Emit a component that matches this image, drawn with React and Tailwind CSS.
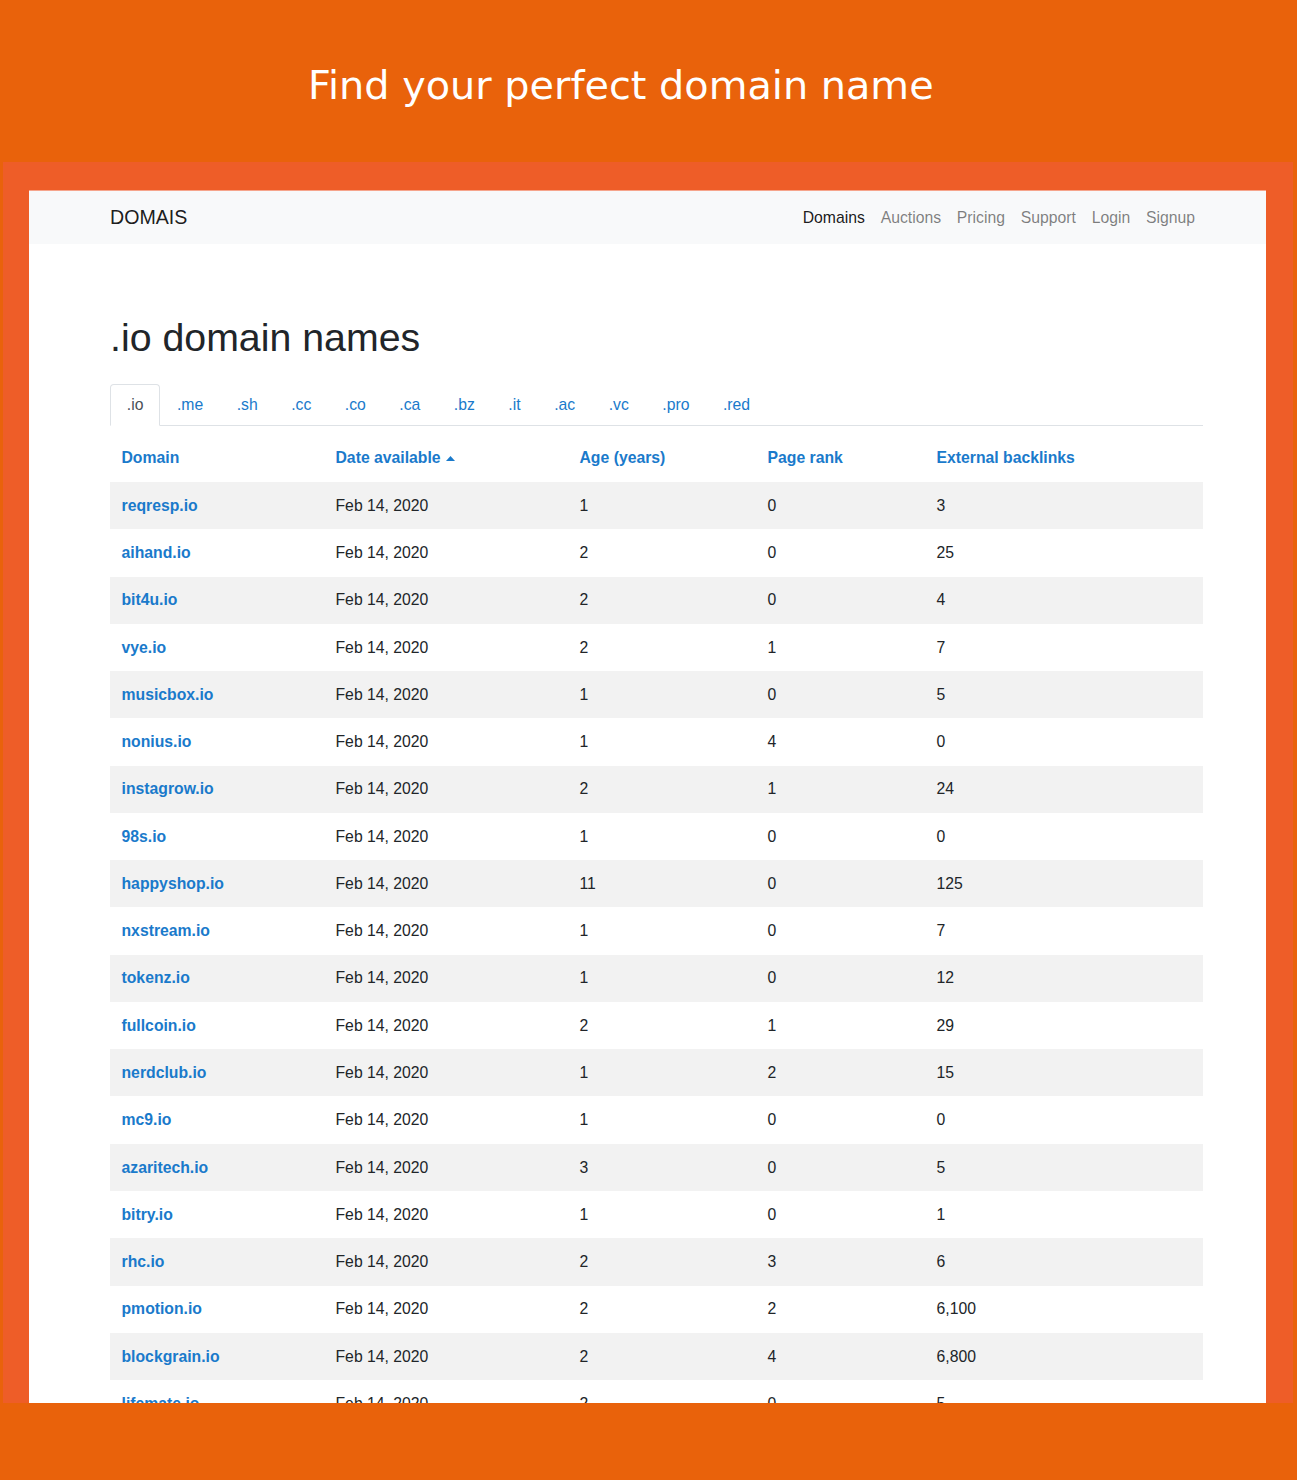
import React from "react";

const rows = [
  ["reqresp.io", "1", "0", "3"],
  ["aihand.io", "2", "0", "25"],
  ["bit4u.io", "2", "0", "4"],
  ["vye.io", "2", "1", "7"],
  ["musicbox.io", "1", "0", "5"],
  ["nonius.io", "1", "4", "0"],
  ["instagrow.io", "2", "1", "24"],
  ["98s.io", "1", "0", "0"],
  ["happyshop.io", "11", "0", "125"],
  ["nxstream.io", "1", "0", "7"],
  ["tokenz.io", "1", "0", "12"],
  ["fullcoin.io", "2", "1", "29"],
  ["nerdclub.io", "1", "2", "15"],
  ["mc9.io", "1", "0", "0"],
  ["azaritech.io", "3", "0", "5"],
  ["bitry.io", "1", "0", "1"],
  ["rhc.io", "2", "3", "6"],
  ["pmotion.io", "2", "2", "6,100"],
  ["blockgrain.io", "2", "4", "6,800"],
  ["lifemate.io", "2", "0", "5"],
];

const tabs = [".io", ".me", ".sh", ".cc", ".co", ".ca", ".bz", ".it", ".ac", ".vc", ".pro", ".red"];
const navs = ["Domains", "Auctions", "Pricing", "Support", "Login", "Signup"];

export default function App() {
  return (
    <div className="w-[1297px] h-[1480px] bg-[#e9620b] overflow-hidden">
      <header className="h-[162px] pl-[308px] pt-[62px]">
        <h1
          className="text-white text-[39.8px] leading-[46px] font-normal whitespace-nowrap"
          style={{ fontFamily: '"DejaVu Sans", sans-serif' }}
        >
          Find your perfect domain name
        </h1>
      </header>
      <div className="ml-[3px] w-[1290px] h-[1241px] bg-[#ee5d28] pt-[28px] pl-[26px] overflow-hidden">
        <div
          className="w-[1237px] h-[1300px] bg-white border-t border-[#f6a58c] text-[#212529] text-[15.75px]"
          style={{ fontFamily: '"Liberation Sans", Arial, sans-serif' }}
        >
          <nav className="h-[53px] bg-[#f8f9fa] flex items-center pl-[81px] pr-[63px]">
            <span className="text-[19.6px] text-black/90 flex-1">DOMAIS</span>
            <ul className="flex">
              {navs.map((n, i) => (
                <li key={n} className={`px-[7.9px] leading-6 ${i === 0 ? "text-black/90" : "text-black/50"}`}>
                  {n}
                </li>
              ))}
            </ul>
          </nav>
          <div className="pl-[81px] w-[1174px]">
            <h2 className="text-[39.3px] leading-[48px] font-normal text-[#212529] pt-[69px] pb-[23px]">.io domain names</h2>
            <ul className="flex border-b border-[#dee2e6]">
              {tabs.map((t, i) => (
                <li
                  key={t}
                  className={`px-[15.75px] py-2 leading-6 border rounded-t mb-[-1px] ${
                    i === 0 ? "border-[#dee2e6] border-b-white bg-white text-[#495057]" : "border-transparent text-[#1a7acb]"
                  }`}
                >
                  {t}
                </li>
              ))}
            </ul>
            <table className="w-[1093px] table-fixed mt-[8px] border-collapse">
              <colgroup>
                <col className="w-[214px]" />
                <col className="w-[244px]" />
                <col className="w-[188px]" />
                <col className="w-[169px]" />
                <col className="w-[278px]" />
              </colgroup>
              <thead>
                <tr className="h-[48px] text-left text-[#1a7acb] font-bold">
                  <th className="pl-[11.5px] pr-3 font-bold">Domain</th>
                  <th className="pl-[11.5px] pr-3 font-bold">
                    <span className="inline-flex items-center gap-[5px]">
                      Date available
                      <svg width="9" height="5" viewBox="0 0 9 5"><path d="M0 5 L4.5 0 L9 5 Z" fill="#1a7acb" /></svg>
                    </span>
                  </th>
                  <th className="pl-[11.5px] pr-3 font-bold">Age (years)</th>
                  <th className="pl-[11.5px] pr-3 font-bold">Page rank</th>
                  <th className="pl-[11.5px] pr-3 font-bold">External backlinks</th>
                </tr>
              </thead>
              <tbody>
                {rows.map((r, i) => (
                  <tr key={r[0]} className={`h-[47.28px] ${i % 2 === 0 ? "bg-[#f2f2f2]" : "bg-white"}`}>
                    <td className="pl-[11.5px] pr-3 font-bold text-[#1a7acb]">{r[0]}</td>
                    <td className="pl-[11.5px] pr-3">Feb 14, 2020</td>
                    <td className="pl-[11.5px] pr-3">{r[1]}</td>
                    <td className="pl-[11.5px] pr-3">{r[2]}</td>
                    <td className="pl-[11.5px] pr-3">{r[3]}</td>
                  </tr>
                ))}
              </tbody>
            </table>
          </div>
        </div>
      </div>
    </div>
  );
}
